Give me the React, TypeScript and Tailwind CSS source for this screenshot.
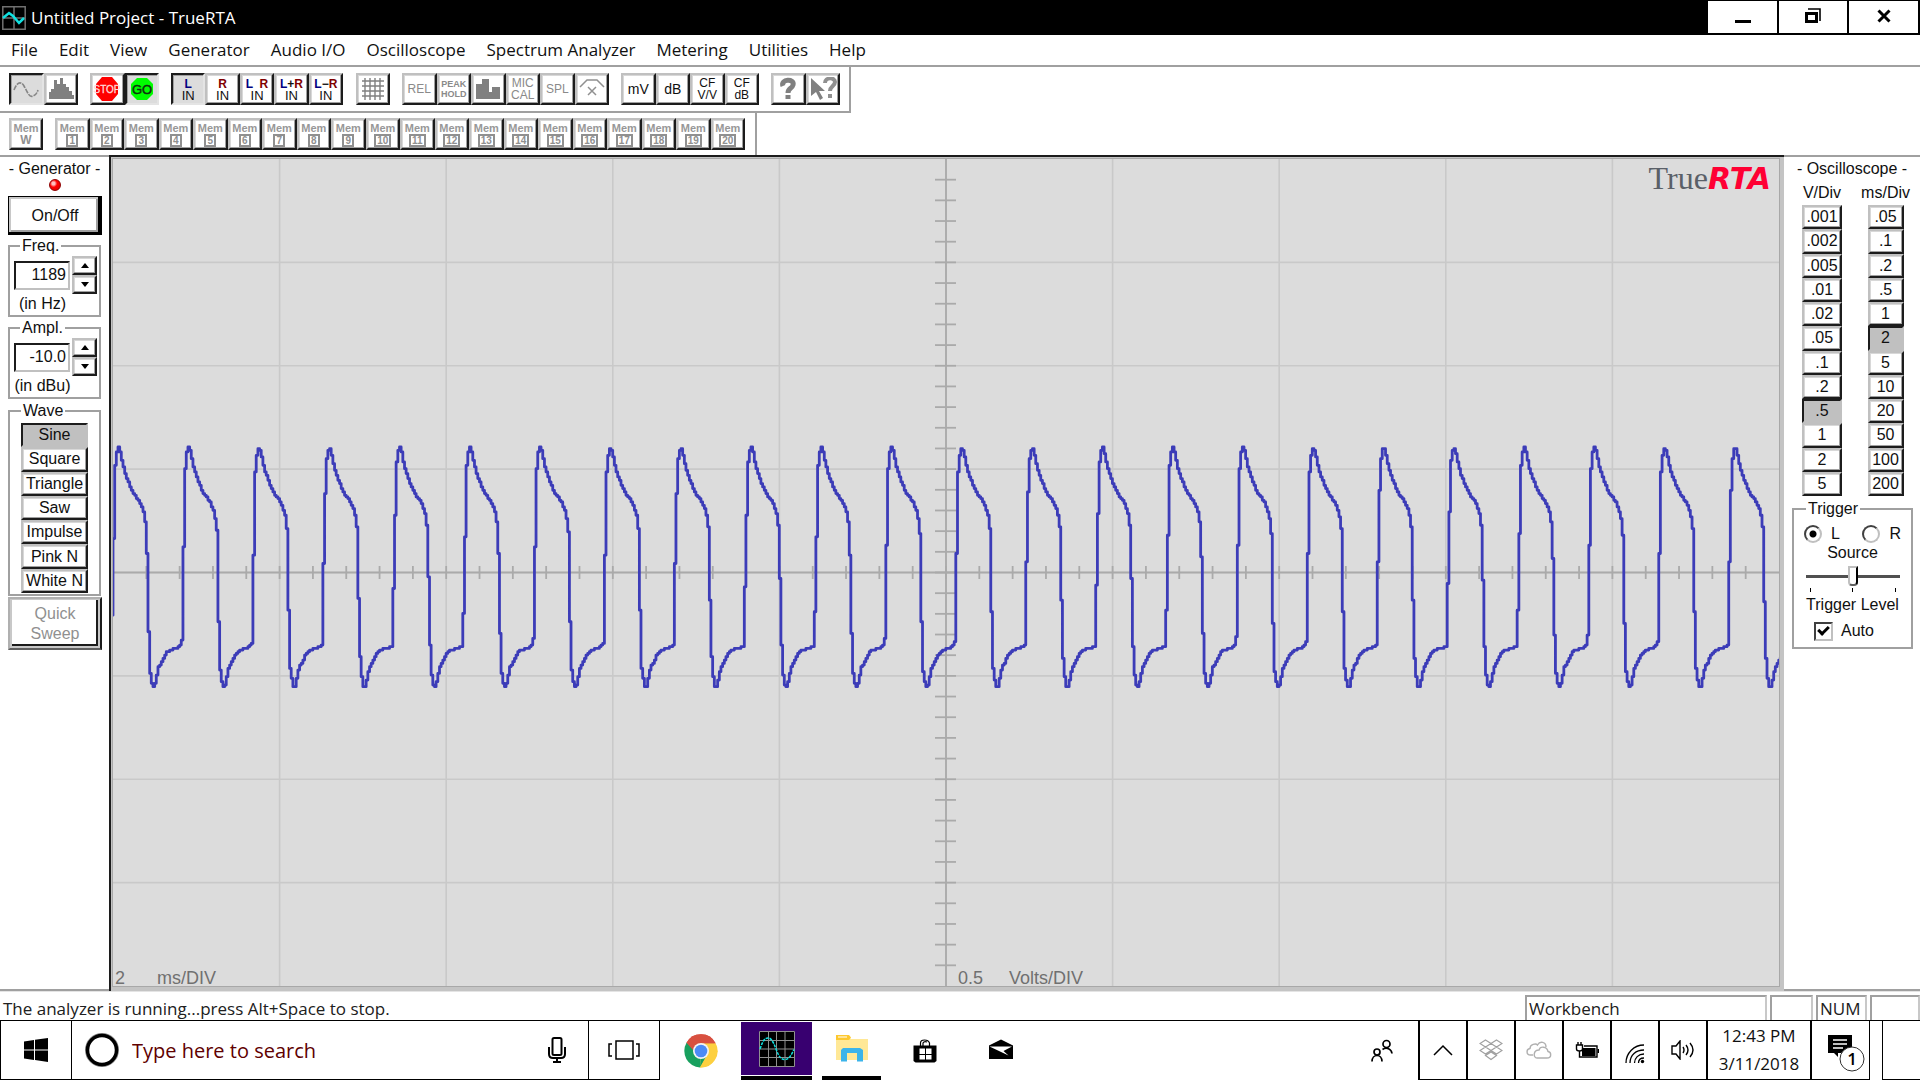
import { useState, type ReactNode } from 'react';
import clsx from 'clsx';

const MENU = [
  'File', 'Edit', 'View', 'Generator', 'Audio I/O', 'Oscilloscope',
  'Spectrum Analyzer', 'Metering', 'Utilities', 'Help',
];

const WAVES = ['Sine', 'Square', 'Triangle', 'Saw', 'Impulse', 'Pink N', 'White N'];
const VOLTS = ['.001', '.002', '.005', '.01', '.02', '.05', '.1', '.2', '.5', '1', '2', '5'];
const TIMES = ['.05', '.1', '.2', '.5', '1', '2', '5', '10', '20', '50', '100', '200'];

const RAISED =
  'bg-white border-2 border-t-[#c0c0c0] border-l-[#c0c0c0] border-r-[#1c1c1c] border-b-[#1c1c1c] shadow-[inset_-1px_-1px_#a0a0a0,inset_1px_1px_#d8d8d8]';
const SUNKEN =
  'bg-[#dcdcdc] border-2 border-t-[#1c1c1c] border-l-[#1c1c1c] border-r-[#e4e4e4] border-b-[#e4e4e4] shadow-[inset_1px_1px_#a0a0a0]';

// One cycle of the input signal: [x offset from the peak, y], in plot units.
const CYCLE: [number, number][] = [
  [-8, 489], [-7, 482], [-6, 405], [-5, 380], [-4, 314], [-3, 303], [-2, 294],
  [0, 288], [2, 294], [4, 305], [6, 313], [9, 321], [12, 329], [15, 335], [18, 339], [21, 343],
  [24, 350], [26, 357], [27, 366], [28, 372], [29, 440], [30, 474], [31, 510], [32, 517],
  [34, 528], [36, 528], [38, 518], [40, 509], [43, 504], [46, 497], [49, 493], [53, 491],
  [58, 490], [61, 488], [62, 486],
];
const PERIOD = 70.33;
const FIRST_PEAK = 5;

function level(x: number) {
  let t = (x - FIRST_PEAK) % PERIOD;
  if (t < -8) t += PERIOD;
  if (t > 62) t -= PERIOD;
  if (t <= -8) return CYCLE[0][1];
  for (let i = 1; i < CYCLE.length; i++) {
    const [x0, y0] = CYCLE[i - 1];
    const [x1, y1] = CYCLE[i];
    if (t <= x1) return y0 + ((y1 - y0) * (t - x0)) / (x1 - x0);
  }
  return 488;
}

function tracePath() {
  const step = 5 / 3;
  let d = '';
  for (let i = -1; i * step < 1670; i++) {
    const y = Math.round(level(i * step) / step) * step;
    d += d ? `H${(i * step).toFixed(1)}V${y.toFixed(1)}` : `M${(i * step).toFixed(1)} ${y.toFixed(1)}`;
  }
  return d;
}

const TRACE = tracePath();
const range = (from: number, to: number) => Array.from({ length: to - from + 1 }, (_, i) => from + i);

function Scope() {
  return (
    <svg
      viewBox="0 0 1667 828"
      preserveAspectRatio="none"
      className="absolute inset-0 h-full w-full"
      fill="none"
      role="img"
      aria-label="Oscilloscope trace"
    >
      <g stroke="#c9c9c9" strokeWidth="1.6">
        {range(1, 9).map((i) => <path key={`v${i}`} d={`M${i * 166.7} 0V828`} />)}
        {range(1, 7).map((i) => <path key={`h${i}`} d={`M0 ${i * 103.5}H1667`} />)}
      </g>
      <g stroke="#aaaaaa" strokeWidth="1.8">
        <path d="M0 414H1667M833.5 0V828" />
        {range(1, 49).map((i) => <path key={`x${i}`} d={`M${i * 33.34} 407.500v13`} />)}
        {range(1, 39).map((i) => <path key={`y${i}`} d={`M822.500 ${i * 20.7}h21`} />)}
      </g>
      <path d={TRACE} stroke="#3c3cb8" strokeWidth="2.800" strokeLinejoin="round" />
    </svg>
  );
}

function ToolButton({ pressed, label, children }: { pressed?: boolean; label: string; children: ReactNode }) {
  return (
    <button
      aria-label={label}
      aria-pressed={pressed}
      className={clsx(
        'flex h-8 min-w-0 flex-1 flex-col items-center justify-center overflow-hidden text-[12px] leading-[12px]',
        pressed ? SUNKEN : RAISED,
      )}
    >
      {children}
    </button>
  );
}

function ChannelIcon({ left, sign, right }: { left?: boolean; sign?: string; right?: boolean }) {
  return (
    <>
      <span className="whitespace-pre pt-[2px] font-bold">
        {left && <span className="text-[#000080]">L</span>}
        {sign}
        {right && <span className="text-[#800000]">R</span>}
      </span>
      <span className="text-[13px]">IN</span>
    </>
  );
}

function MemButton({ slot }: { slot: string }) {
  return (
    <ToolButton label={`Memory ${slot}`}>
      <span className="text-[11px] font-bold leading-[12px] text-[#989898]">Mem</span>
      {slot === 'W' ? (
        <span className="text-[12px] font-bold leading-[13px] text-[#909090]">W</span>
      ) : (
        <span className="border-2 border-[#909090] px-px text-[10px] font-bold leading-[9px] text-[#909090]">{slot}</span>
      )}
    </ToolButton>
  );
}

function SineGlyph() {
  return (
    <svg viewBox="0 0 28 24" className="h-6 w-7" fill="none" stroke="#858585" strokeWidth="1.600">
      <path d="M2 13C5 5 9 4 12 9s5 12 9 10c3-1 4-3 5-6" strokeDasharray="5 1" />
    </svg>
  );
}

function HelpGlyph() {
  return (
    <svg viewBox="0 0 20 24" className="h-6 w-5" fill="none" stroke="#808080" strokeWidth="5">
      <path d="M5 9C2 2 17 1 15 8c-1 4-5 3-5 8M10 18v4" />
    </svg>
  );
}

function Toolbar() {
  return (
    <div className="flex w-[851px] border-r-2 border-b-2 border-[#a0a0a0] py-[6px] pl-[9px]">
      <div className="mr-3 flex w-[69px]">
        <ToolButton label="Oscilloscope" pressed><SineGlyph /></ToolButton>
        <ToolButton label="Spectrum analyzer">
          <svg viewBox="0 0 26 24" className="h-6 w-[26px]" fill="#808080">
            <path d="M1 22v-7h2v-3h3V3h3v4h3V1h3v6h3v3h3v4h3v4h2v4z" />
          </svg>
        </ToolButton>
      </div>
      <div className="mr-3 flex w-[69px]">
        <ToolButton label="Stop">
          <svg viewBox="0 0 28 26" className="h-[26px] w-7">
            <path d="M9 1h10l6 7v10l-6 7H9l-6-7V8z" fill="#ff0000" />
            <text x="14" y="17" textAnchor="middle" fontSize="10" fill="#ffd8d8" stroke="#ffd8d8" strokeWidth=".3" fontFamily="Liberation Sans">STOP</text>
          </svg>
        </ToolButton>
        <ToolButton label="Go" pressed>
          <svg viewBox="0 0 28 26" className="h-[26px] w-7">
            <path d="M9 2h10l6 6v10l-6 6H9l-6-6V8z" fill="#00ff00" />
            <text x="14" y="18" textAnchor="middle" fontSize="13" fill="#103010" stroke="#103010" strokeWidth=".5" fontFamily="Liberation Sans">GO</text>
          </svg>
        </ToolButton>
      </div>
      <div className="mr-[13px] flex w-[172px]">
        <ToolButton label="Left in" pressed><ChannelIcon left /></ToolButton>
        <ToolButton label="Right in"><ChannelIcon right /></ToolButton>
        <ToolButton label="Left and right in"><ChannelIcon left sign="  " right /></ToolButton>
        <ToolButton label="Left plus right in"><ChannelIcon left sign="+" right /></ToolButton>
        <ToolButton label="Left minus right in"><ChannelIcon left sign="−" right /></ToolButton>
      </div>
      <div className="mr-3 flex w-[34px]">
        <ToolButton label="Grid">
          <svg viewBox="0 0 24 24" className="h-6 w-6" stroke="#808080" strokeWidth="1.400">
            <path d="M4 1v22M9 1v22M14 1v22M19 1v22M1 4h22M1 9h22M1 14h22M1 19h22" />
          </svg>
        </ToolButton>
      </div>
      <div className="mr-3 flex w-[207px] text-[#8a8a8a]">
        <ToolButton label="Relative">REL</ToolButton>
        <ToolButton label="Peak hold">
          <span className="text-[9px] font-bold leading-[10px]">PEAK</span>
          <span className="text-[9px] font-bold leading-[10px]">HOLD</span>
        </ToolButton>
        <ToolButton label="Bars">
          <svg viewBox="0 0 26 22" className="h-[22px] w-[26px]" fill="#808080">
            <path d="M1 21V6h6V1h7v13h3V9h8v12z" />
          </svg>
        </ToolButton>
        <ToolButton label="Mic calibration"><span>MIC</span><span>CAL</span></ToolButton>
        <ToolButton label="SPL">SPL</ToolButton>
        <ToolButton label="Crossover">
          <svg viewBox="0 0 26 22" className="h-[22px] w-[26px]" fill="none" stroke="#909090" strokeWidth="1.500">
            <path d="M1 9l7-7h10l7 7M9 9l8 8M17 9l-8 8" />
          </svg>
        </ToolButton>
      </div>
      <div className="mr-3 flex w-[138px]">
        <ToolButton label="Millivolts"><span className="text-[14px]">mV</span></ToolButton>
        <ToolButton label="Decibels"><span className="text-[14px]">dB</span></ToolButton>
        <ToolButton label="Crest factor V/V"><span>CF</span><span>V/V</span></ToolButton>
        <ToolButton label="Crest factor dB"><span>CF</span><span>dB</span></ToolButton>
      </div>
      <div className="flex w-[69px]">
        <ToolButton label="Help"><HelpGlyph /></ToolButton>
        <ToolButton label="Context help">
          <svg viewBox="0 0 28 24" className="h-6 w-7" fill="#808080">
            <path d="M2 1v18l5-4 4 8 3-2-4-7h6z" />
            <path d="M16 6c0-6 10-6 10-1 0 4-5 4-5 9M21 17v4" fill="none" stroke="#909090" strokeWidth="4" />
          </svg>
        </ToolButton>
      </div>
    </div>
  );
}

function Spinner({ name }: { name: string }) {
  return (
    <div className="flex flex-col">
      <button aria-label={`${name} up`} className={clsx('flex h-[19px] w-[25px] items-center justify-center', RAISED)}>
        <svg viewBox="0 0 8 5" className="h-[5px] w-2"><path d="M4 0l4 5H0z" /></svg>
      </button>
      <button aria-label={`${name} down`} className={clsx('flex h-[19px] w-[25px] items-center justify-center', RAISED)}>
        <svg viewBox="0 0 8 5" className="h-[5px] w-2"><path d="M4 5l4-5H0z" /></svg>
      </button>
    </div>
  );
}

function NumberGroup({ legend, unit, value, id }: { legend: string; unit: string; value: string; id: string }) {
  const [text, setText] = useState(value);
  return (
    <fieldset className="mx-2 mb-px border-2 border-[#a0a0a0] pb-px">
      <legend className="ml-[10px] px-[2px] leading-5">{legend}</legend>
      <div className="flex items-center gap-[2px] pl-1">
        <input
          id={id}
          value={text}
          onChange={(e) => setText(e.target.value)}
          className="h-[29px] w-14 border-2 border-t-[#1c1c1c] border-l-[#1c1c1c] border-r-[#c0c0c0] border-b-[#c0c0c0] px-[2px] text-right outline-none"
        />
        <Spinner name={legend} />
      </div>
      <label htmlFor={id} className="block text-center leading-5 pr-6 whitespace-nowrap">{unit}</label>
    </fieldset>
  );
}

function PickButton({ active, onClick, children }: { active: boolean; onClick: () => void; children: string }) {
  return (
    <button
      onClick={onClick}
      aria-pressed={active}
      className={clsx(
        'flex min-h-6 w-full flex-1 items-center justify-center whitespace-nowrap leading-5',
        active
          ? 'border-2 border-t-[#1c1c1c] border-l-[#1c1c1c] border-r-[#c0c0c0] border-b-[#c0c0c0] bg-[#c0c0c0]'
          : RAISED,
      )}
    >
      {children}
    </button>
  );
}

function GeneratorPanel() {
  const [wave, setWave] = useState('Sine');
  return (
    <aside className="w-[109px] shrink-0 border-y-2 border-[#a0a0a0] bg-white">
      <h2 className="pt-[2px] text-center leading-5">- Generator -</h2>
      <div className="mx-auto mb-[5px] h-3 w-3 rounded-full border border-[#900000] bg-[radial-gradient(circle_at_35%_35%,#ffc0c0_0_15%,#ff0000_40%,#d00000)]" />
      <button className="mx-2 mb-px block h-[39px] w-[94px] border border-r-4 border-b-[3px] border-black bg-white pt-[2px] pl-[3px] shadow-[inset_2px_2px_#c8c8c8,inset_-2px_-2px_#a0a0a0]">
        On/Off
      </button>
      <NumberGroup legend="Freq." unit="(in Hz)" value="1189" id="freq" />
      <NumberGroup legend="Ampl." unit="(in dBu)" value="-10.0" id="ampl" />
      <fieldset className="mx-2 mt-[2px] border-2 border-[#a0a0a0] px-[11px] pb-px">
        <legend className="px-[2px] leading-5">Wave</legend>
        <div className="mt-[2px] flex h-[170px] flex-col">
          {WAVES.map((w) => (
            <PickButton key={w} active={w === wave} onClick={() => setWave(w)}>{w}</PickButton>
          ))}
        </div>
      </fieldset>
      <button
        disabled
        className="mx-2 mt-px block h-[53px] w-[94px] border-2 border-t-[#b0b0b0] border-l-[#b0b0b0] border-r-[#1c1c1c] border-b-[#606060] bg-white leading-5 text-[#909090] shadow-[inset_2px_1px_#c8c8c8,inset_-2px_-2px_#c8c8c8,inset_-4px_-4px_#1c1c1c]"
      >
        Quick<br />Sweep
      </button>
    </aside>
  );
}

const RADIO =
  'h-[18px] w-[18px] appearance-none rounded-full border-2 border-t-[#404040] border-l-[#404040] border-r-[#c0c0c0] border-b-[#c0c0c0] bg-white checked:bg-[radial-gradient(circle,#000_0_3px,#fff_4px)]';

function ScopePanel() {
  const [volts, setVolts] = useState('.5');
  const [time, setTime] = useState('2');
  return (
    <aside className="w-[136px] shrink-0 border-y-2 border-[#a0a0a0] bg-white">
      <h2 className="whitespace-nowrap pt-[2px] text-center leading-5">- Oscilloscope -</h2>
      <div className="mt-1 flex justify-between pr-[10px] pl-[18px]">
        <div className="flex flex-col items-center leading-5">
          V/Div
          <div className="mt-[2px] flex h-[291px] w-10 flex-col">
            {VOLTS.map((v) => (
              <PickButton key={v} active={v === volts} onClick={() => setVolts(v)}>{v}</PickButton>
            ))}
          </div>
        </div>
        <div className="flex flex-col items-center leading-5">
          ms/Div
          <div className="mt-[2px] flex h-[291px] w-9 flex-col">
            {TIMES.map((t) => (
              <PickButton key={t} active={t === time} onClick={() => setTime(t)}>{t}</PickButton>
            ))}
          </div>
        </div>
      </div>
      <fieldset className="mt-[3px] mr-[7px] ml-2 border-2 border-[#a0a0a0] pb-[6px]">
        <legend className="ml-3 px-[2px] leading-5">Trigger</legend>
        <div className="mt-[5px] flex justify-between px-[10px] leading-5">
          <label className="flex items-center gap-[9px]">
            <input type="radio" name="trigger" defaultChecked className={RADIO} />L
          </label>
          <label className="flex items-center gap-[9px]">
            <input type="radio" name="trigger" className={RADIO} />R
          </label>
        </div>
        <p className="-mt-px text-center leading-5">Source</p>
        <input
          id="level"
          type="range"
          defaultValue={50}
          className="mx-auto mt-[3px] block h-5 w-[94px] appearance-none bg-[linear-gradient(#505050,#505050)] bg-[length:100%_3px] bg-center bg-no-repeat [&::-webkit-slider-thumb]:h-5 [&::-webkit-slider-thumb]:w-[10px] [&::-webkit-slider-thumb]:appearance-none [&::-webkit-slider-thumb]:rounded-b [&::-webkit-slider-thumb]:border-2 [&::-webkit-slider-thumb]:border-[#c0c0c0] [&::-webkit-slider-thumb]:border-r-black [&::-webkit-slider-thumb]:border-b-[#606060] [&::-webkit-slider-thumb]:bg-white"
        />
        <div className="mx-auto mt-[2px] flex h-1 w-[86px] justify-between">
          <i className="w-px bg-black" />
          <i className="w-px bg-black" />
          <i className="w-px bg-black" />
        </div>
        <label htmlFor="level" className="block pt-[3px] text-center leading-5 whitespace-nowrap">Trigger Level</label>
        <label className="mt-[6px] ml-5 flex items-center gap-2 leading-5">
          <input
            type="checkbox"
            defaultChecked
            className="h-[19px] w-[19px] appearance-none border-2 border-t-[#404040] border-l-[#404040] border-r-[#c0c0c0] border-b-[#c0c0c0] checked:before:block checked:before:h-[7px] checked:before:w-[11px] checked:before:translate-x-[2px] checked:before:translate-y-[2px] checked:before:-rotate-45 checked:before:border-b-[3px] checked:before:border-l-[3px] checked:before:border-black"
          />
          Auto
        </label>
      </fieldset>
    </aside>
  );
}

function StatusBar() {
  const box = 'border-2 border-b-0 border-t-[#a0a0a0] border-l-[#a0a0a0] border-r-[#c8c8c8] pl-[2px]';
  return (
    <footer className="flex h-[29px] items-stretch border-t border-[#e4e4e4] bg-white pt-[3px] font-['Open_Sans','Noto_Sans',sans-serif] text-[17px] leading-6 text-[#202020]">
      <p className="flex-1 pt-[2px] pl-[3px]">The analyzer is running...press Alt+Space to stop.</p>
      <div className="flex gap-[3px]">
        <div className={clsx('w-[242px]', box)}>Workbench</div>
        <div className={clsx('w-[43px]', box)} />
        <div className={clsx('w-[51px]', box)}>NUM</div>
        <div className={clsx('w-[50px]', box)} />
      </div>
    </footer>
  );
}

function TrayButton({ label, children }: { label: string; children: ReactNode }) {
  return (
    <button aria-label={label} className="flex w-12 items-center justify-center border-b border-l-2 border-black">
      {children}
    </button>
  );
}

function Taskbar() {
  return (
    <nav className="flex h-[60px] items-stretch border-t border-black bg-white font-['Open_Sans','Noto_Sans',sans-serif]">
      <button aria-label="Start" className="flex w-[72px] items-center justify-center border-x border-b border-black">
        <svg viewBox="0 0 24 24" className="h-6 w-6">
          <path d="M0 3.500L10 2v9.500H0zM11 1.800L24 0v11.500H11zM0 12.500h10V22L0 20.500zM11 12.500h13V24l-13-1.900z" />
        </svg>
      </button>
      <div className="flex w-[517px] items-center border-r border-b border-black pl-[13px]">
        <svg viewBox="0 0 34 34" className="h-[34px] w-[34px]" fill="none">
          <circle cx="17" cy="17" r="15.500" stroke="#8a8a8a" strokeWidth="3" />
          <circle cx="17" cy="17" r="14.500" stroke="#000" strokeWidth="3.500" />
        </svg>
        <input
          aria-label="Search"
          placeholder="Type here to search"
          className="ml-[13px] min-w-0 flex-1 pt-[2px] text-[20px] outline-none placeholder:text-[#600000] placeholder:opacity-100"
        />
        <svg viewBox="0 0 18 26" className="mr-[22px] h-[26px] w-[18px]" fill="none" stroke="#000" strokeWidth="2">
          <rect x="4.500" y="1" width="9" height="17" rx="1.500" />
          <path d="M1 10v7q0 4 4 4h8q4 0 4-4v-7M9 21v4M5 25h8" />
        </svg>
      </div>
      <button aria-label="Task view" className="flex w-[71px] items-center justify-center border-r border-b border-black">
        <svg viewBox="0 0 32 20" className="h-5 w-8" fill="none" stroke="#000" strokeWidth="1.500">
          <path d="M8 1h17v18H8zM4 4H1v12h3M28 4h3v12h-3" />
        </svg>
      </button>
      <div className="flex flex-1 items-stretch">
        <button aria-label="Chrome" className="flex w-[81px] items-center justify-center">
          <svg viewBox="0 0 34 34" className="h-[34px] w-[34px]">
            <path d="M17 17L2.500 8.800A16.500 16.500 0 0 1 31.600 9.300z" fill="#d85040" />
            <path d="M17 17L31.600 9.300A16.500 16.500 0 0 1 16 33.500z" fill="#fdd040" />
            <path d="M17 17L16 33.500A16.500 16.500 0 0 1 2.500 8.800z" fill="#18a05e" />
            <path d="M17 9.300h14.600L24 19z" fill="#fdd040" />
            <path d="M2.500 8.800L10.300 21 17 17zM16 33.500L24 20l-7-3z" fill="#18a05e" />
            <path d="M2.500 8.800A16.500 16.500 0 0 1 31.600 9.300H17L9 16z" fill="#d85040" />
            <path d="M16 33.500L24 19l1-8h7A16.500 16.500 0 0 1 16 33.500z" fill="#fdd040" />
            <circle cx="17" cy="17" r="8" fill="#f4f4f4" />
            <circle cx="17" cy="17" r="6.300" fill="#4c8bf5" />
          </svg>
        </button>
        <button aria-label="TrueRTA" className="mt-px flex w-[71px] flex-col border-b-4 border-black">
          <span className="mb-px flex w-full flex-1 items-center justify-center bg-[#380070]">
            <svg viewBox="0 0 36 36" className="h-9 w-9" fill="none">
              <path d="M0 0h36v36H0z" fill="#000" />
              <path d="M.5.5h35v35H.5zM9.500 0v36M17.500 0v36M26 0v36M0 9.500h36M0 18h36M0 26.500h36" stroke="#909090" />
              <path d="M1 18C4 9 6 7 9 7s5 3 8 11 5 10.500 9 10.500 6-4 9-10" stroke="#10e0e0" strokeWidth="1.500" strokeDasharray="3 1" />
            </svg>
          </span>
        </button>
        <button aria-label="File Explorer" className="ml-[10px] flex w-[59px] items-center justify-center border-b-4 border-black">
          <svg viewBox="0 0 32 27" className="h-[27px] w-8">
            <path d="M0 1h12l3 3h17v21H0z" fill="#ffe896" />
            <path d="M0 0h13l2 2.500L13 5H0z" fill="#fdc82f" />
            <path d="M2 2h9" stroke="#fff" />
            <path d="M5 26.500V15l2-2h17l3 2v11.500h-6V18H11v8.500z" fill="#3bb4ea" />
          </svg>
        </button>
        <button aria-label="Store" className="ml-3 flex w-16 items-center justify-center">
          <svg viewBox="0 0 24 24" className="h-6 w-6">
            <path d="M7.500 7V4q0-3 4-3t5 3v3M10 7V4q1-2 4-1" fill="none" stroke="#000" strokeWidth="1.200" />
            <path d="M.5 6.500h23V22l-2 1.500h-19L.5 22z" />
            <path d="M6.500 9.500H12V15H6.500zM13 9.500h5.500V15H13zM6.500 16H12v4.500H6.500zM13 16h5.500v4.500H13z" fill="#fff" />
          </svg>
        </button>
        <button aria-label="Mail" className="ml-3 flex w-16 items-center justify-center pb-1">
          <svg viewBox="0 0 24 20" className="h-5 w-6">
            <path d="M0 6.500L12 .5l12 6V20H0z" />
            <path d="M.5 7.500h22.500l-8.500 4.500 5 4.500z" fill="#fff" />
          </svg>
        </button>
      </div>
      <button aria-label="People" className="flex w-[72px] items-center justify-center">
        <svg viewBox="0 0 22 24" className="h-6 w-[22px]" fill="none" stroke="#000" strokeWidth="1.700">
          <circle cx="6" cy="13" r="3" />
          <circle cx="15.500" cy="5" r="3.500" />
          <path d="M1 22.500c0-8 10-8 10 0M11.500 10.500c4-3 9-.5 9.500 4" />
        </svg>
      </button>
      <TrayButton label="Show hidden icons">
        <svg viewBox="0 0 20 12" className="h-3 w-5" fill="none" stroke="#000" strokeWidth="1.500"><path d="M1 11l9-9 9 9" /></svg>
      </TrayButton>
      <TrayButton label="Dropbox">
        <svg viewBox="0 0 24 22" className="h-[22px] w-6" fill="none" stroke="#a0a0a0" strokeWidth="1.200">
          <path d="M6.500 1L12 4.500 6.500 8 1 4.500zM17.500 1L23 4.500 17.500 8 12 4.500zM6.500 8l5.500 3.500L6.500 15 1 11.500zM17.500 8l5.500 3.500-5.500 3.500-5.500-3.500zM6.500 16.500L12 13l5.500 3.500L12 20.500z" />
        </svg>
      </TrayButton>
      <TrayButton label="OneDrive">
        <svg viewBox="0 0 26 18" className="h-[18px] w-[26px]" fill="none" stroke="#b0b0b0" strokeWidth="1.400">
          <path d="M7 14H4.500C0 14 0 8 4 7.500 4 3 10 2 11.500 4 14-.5 20 1 20 6" />
          <path d="M11 17h10c5 0 4.500-6 1-6.500C21 5 14 5 13 9c-6 0-6 8-2 8z" />
        </svg>
      </TrayButton>
      <TrayButton label="Power">
        <svg viewBox="0 0 24 18" className="h-[18px] w-6">
          <path d="M1.500 4h6v4q0 2-3 2t-3-2zM3 1v3M6 1v3M4.500 10v6H22V5H9" fill="none" stroke="#000" strokeWidth="1.400" />
          <path d="M7 7h13.500v8H7zM22.500 8H24v4h-1.500z" />
        </svg>
      </TrayButton>
      <TrayButton label="Wi-Fi">
        <svg viewBox="0 0 20 20" className="mt-2 h-5 w-5" fill="none" stroke="#000" strokeWidth="1.300">
          <path d="M1 19C1 9 9 1 19 1M5 19C5 11 11 6 19 6M9.500 19c0-5 4-9 9.500-9M13.500 19c0-3 2-5 5.500-5" />
          <circle cx="17.500" cy="17.500" r="1.700" fill="#000" stroke="none" />
        </svg>
      </TrayButton>
      <TrayButton label="Volume">
        <svg viewBox="0 0 24 20" className="h-5 w-6" fill="none" stroke="#000" strokeWidth="1.400">
          <path d="M1 6h4l4-5v18l-4-5H1zM12 7q2 3 0 6M15 5q4 5 0 10M19 3q6 7 0 14" />
        </svg>
      </TrayButton>
      <button className="flex w-[104px] flex-col items-center justify-center border-b border-l-2 border-black text-[17px] leading-7">
        <span>12:43 PM</span>
        <span>3/11/2018</span>
      </button>
      <button aria-label="Notifications" className="flex w-[60px] items-center justify-center border-r border-b border-l-2 border-black">
        <svg viewBox="0 0 38 38" className="mt-[6px] ml-[10px] h-[38px] w-[38px]">
          <path d="M1 1h24v18H11v4l-4-4H1z" />
          <path d="M6 6h14M6 10h14M6 14h10" stroke="#fff" strokeWidth="1.300" />
          <circle cx="25" cy="25" r="12" fill="#fff" stroke="#303030" />
          <text x="25" y="31" textAnchor="middle" fontSize="17" fontWeight="600" fontFamily="Open Sans">1</text>
        </svg>
      </button>
      <button aria-label="Show desktop" className="ml-3 w-[38px] border-b border-l border-black" />
    </nav>
  );
}

export default function App() {
  return (
    <div className="flex min-h-screen flex-col bg-white font-['Liberation_Sans',Arial,sans-serif] text-[16px] text-[#101010]">
      <header className="flex h-[35px] items-center bg-black pl-[2px] font-['Open_Sans','Noto_Sans',sans-serif] text-white">
        <svg viewBox="0 0 24 24" className="h-6 w-6" fill="none">
          <path d="M.8.800h22.400v22.400H.8zM12 1v22M1 12h22" stroke="#707070" strokeWidth="1.500" />
          <path d="M1 12l6-5 4 3 6 7 5-5" stroke="#10e0e0" strokeWidth="2.500" />
        </svg>
        <h1 className="flex-1 pt-px pl-[5px] text-[17px]">Untitled Project - TrueRTA</h1>
        <div className="flex gap-[2px] self-start pt-px pr-[2px] text-black">
          <button aria-label="Minimize" className="flex h-8 w-[69px] items-center justify-center bg-white">
            <svg viewBox="0 0 16 14" className="h-[14px] w-4"><path d="M0 10h16v3H0z" /></svg>
          </button>
          <button aria-label="Restore" className="flex h-8 w-[68px] items-center justify-center bg-white pb-[2px]">
            <svg viewBox="0 0 16 16" className="h-4 w-4" fill="none" stroke="#000">
              <path d="M1.500 5.500h10v8h-10z" strokeWidth="3" />
              <path d="M3 1h12v12" strokeWidth="1.600" />
            </svg>
          </button>
          <button aria-label="Close" className="flex h-8 w-[69px] items-center justify-center bg-white pb-[2px]">
            <svg viewBox="0 0 14 14" className="h-[14px] w-[14px]" stroke="#000" strokeWidth="3"><path d="M1.500 1.500l11 11M12.500 1.500l-11 11" /></svg>
          </button>
        </div>
      </header>

      <nav className="flex h-8 gap-[21px] border-b-2 border-[#a0a0a0] pl-[11px] font-['Open_Sans','Noto_Sans',sans-serif] text-[17px] leading-[30px]">
        {MENU.map((item) => (
          <button key={item}>{item}</button>
        ))}
      </nav>

      <Toolbar />
      <div className="flex w-[757px] border-r-2 border-[#a0a0a0] pt-[5px] pb-[5px] pl-[9px]">
        <div className="mr-3 flex w-[34px]"><MemButton slot="W" /></div>
        <div className="flex w-[690px]">
          {range(1, 20).map((n) => <MemButton key={n} slot={String(n)} />)}
        </div>
      </div>

      <main className="flex flex-1 items-stretch">
        <GeneratorPanel />
        <section className="flex min-w-0 flex-1 border-t-2 border-l-2 border-[#1c1c1c]">
          <div className="flex flex-1 border-t border-r-4 border-b-4 border-l border-[#c4c4c4]">
            <div className="relative flex flex-1 flex-col justify-between border border-[#a8a8a8] bg-[#dcdcdc]">
              <Scope />
              <p className="relative flex items-baseline justify-end pt-px pr-2 leading-9">
                <span className="font-['Liberation_Serif',serif] text-[32px] text-[#5a6068]">True</span>
                <span className="font-['DejaVu_Sans',sans-serif] text-[30px] font-bold italic text-[#ff0033]">RTA</span>
              </p>
              <div className="relative flex text-[18px] leading-4 text-[#707070]">
                <p className="flex w-1/2 gap-8 pl-[2px]"><span>2</span><span>ms/DIV</span></p>
                <p className="flex w-1/2 gap-[26px] pl-3"><span>0.5</span><span>Volts/DIV</span></p>
              </div>
            </div>
          </div>
        </section>
        <ScopePanel />
      </main>

      <StatusBar />
      <Taskbar />
    </div>
  );
}
